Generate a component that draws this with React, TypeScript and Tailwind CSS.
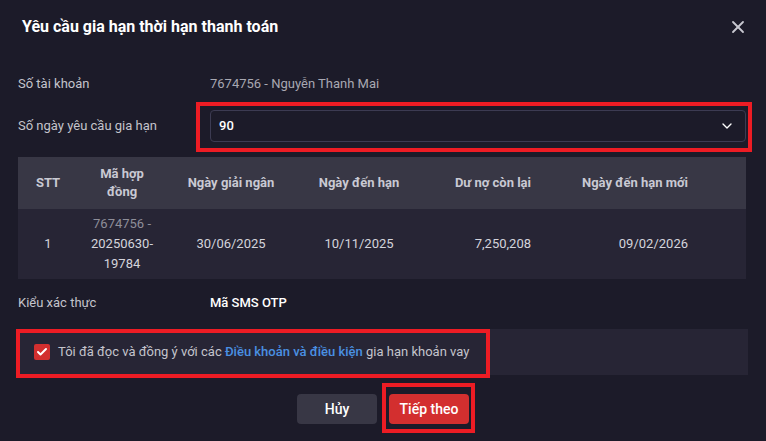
import { X, ChevronDown, Check } from "lucide-react";

const rows = [
  {
    stt: "1",
    contract: ["7674756 -", "20250630-", "19784"],
    disbursed: "30/06/2025",
    due: "10/11/2025",
    remaining: "7,250,208",
    newDue: "09/02/2026",
  },
];

const cols = "grid grid-cols-[60px_88px_130px_126px_121px_1fr]";

export default function App() {
  return (
    <div className="w-[766px] h-[441px] bg-[#1c1b29] text-[#d4d4dc] font-['Roboto',sans-serif] text-[13px] overflow-hidden">
      {/* Header */}
      <div className="flex items-center justify-between h-[54px] pl-[22px] pr-[18px]">
        <h1 className="text-[16px] font-bold text-white">Yêu cầu gia hạn thời hạn thanh toán</h1>
        <X className="w-[20px] h-[20px] text-[#c8c8d0]" strokeWidth={2.2} />
      </div>

      <div className="px-[18px] pt-[18px]">
        {/* Account */}
        <div className="flex items-center h-[24px]">
          <span className="w-[192px] text-[#c4c4cc]">Số tài khoản</span>
          <span className="text-[#a8a8b2]">7674756 - Nguyễn Thanh Mai</span>
        </div>

        {/* Extension days */}
        <div className="flex items-center mt-[14px] h-[32px]">
          <span className="w-[192px] text-[#c4c4cc]">Số ngày yêu cầu gia hạn</span>
          <div className="relative flex-1 mr-[2px]">
            <div className="flex items-center justify-between h-[32px] px-[8px] rounded-[4px] border border-[#3c3b52] bg-[#1c1b29]">
              <span className="text-white font-medium">90</span>
              <ChevronDown className="w-[16px] h-[16px] text-white mr-[2px]" strokeWidth={2} />
            </div>
            <div className="absolute -left-[14px] -right-[6px] -top-[8px] -bottom-[10px] border-[4px] border-[#ed1c24] pointer-events-none" />
          </div>
        </div>

        {/* Contracts table */}
        <div className="mt-[15px] w-[728px]">
          <div className={`${cols} bg-[#383745] h-[52px] items-center font-bold text-[#c9c9d3] leading-[18px]`}>
            <div className="text-center">STT</div>
            <div className="text-center px-[12px]">Mã hợp đồng</div>
            <div className="text-center">Ngày giải ngân</div>
            <div className="text-center">Ngày đến hạn</div>
            <div className="text-right pr-[12px]">Dư nợ còn lại</div>
            <div className="text-right pr-[58px]">Ngày đến hạn mới</div>
          </div>
          {rows.map((r) => (
            <div key={r.stt} className={`${cols} bg-[#272535] h-[70px] items-center leading-[20px] text-[#d4d4dc]`}>
              <div className="text-center">{r.stt}</div>
              <div className="text-center">
                <div className="text-[#8e8e99]">{r.contract[0]}</div>
                <div>{r.contract[1]}</div>
                <div>{r.contract[2]}</div>
              </div>
              <div className="text-center">{r.disbursed}</div>
              <div className="text-center">{r.due}</div>
              <div className="text-right pr-[12px]">{r.remaining}</div>
              <div className="text-right pr-[58px]">{r.newDue}</div>
            </div>
          ))}
        </div>

        {/* Verification type */}
        <div className="flex items-center h-[24px] mt-[12px]">
          <span className="w-[192px] text-[#c4c4cc]">Kiểu xác thực</span>
          <span className="text-white font-medium">Mã SMS OTP</span>
        </div>

        {/* Terms agreement */}
        <div className="relative mt-[14px] w-[730px] h-[46px] bg-[#272535] flex items-center pl-[16px]">
          <span className="flex items-center justify-center w-[16px] h-[16px] rounded-[2px] bg-[#d32f2f]">
            <Check className="w-[12px] h-[12px] text-white" strokeWidth={4} />
          </span>
          <span className="ml-[8px] text-[#c4c4cc] text-[13px]">
            Tôi đã đọc và đồng ý với các{" "}
            <span className="text-[#4a90e2] font-medium">Điều khoản và điều kiện</span> gia hạn khoản vay
          </span>
          <div className="absolute -left-[2px] top-0 w-[474px] -bottom-[3px] border-[4px] border-[#ed1c24] pointer-events-none" />
        </div>

        {/* Actions */}
        <div className="flex justify-center gap-[12px] mt-[19px]">
          <button className="w-[80px] h-[30px] rounded-[4px] bg-[#383745] text-white font-medium text-[14px]">Hủy</button>
          <div className="relative">
            <button className="w-[80px] h-[30px] rounded-[4px] bg-[#d32f2f] text-white font-medium text-[14px]">Tiếp theo</button>
            <div className="absolute -left-[7px] -right-[6px] -top-[11px] -bottom-[9px] border-[4px] border-[#ed1c24] pointer-events-none" />
          </div>
        </div>
      </div>
    </div>
  );
}
